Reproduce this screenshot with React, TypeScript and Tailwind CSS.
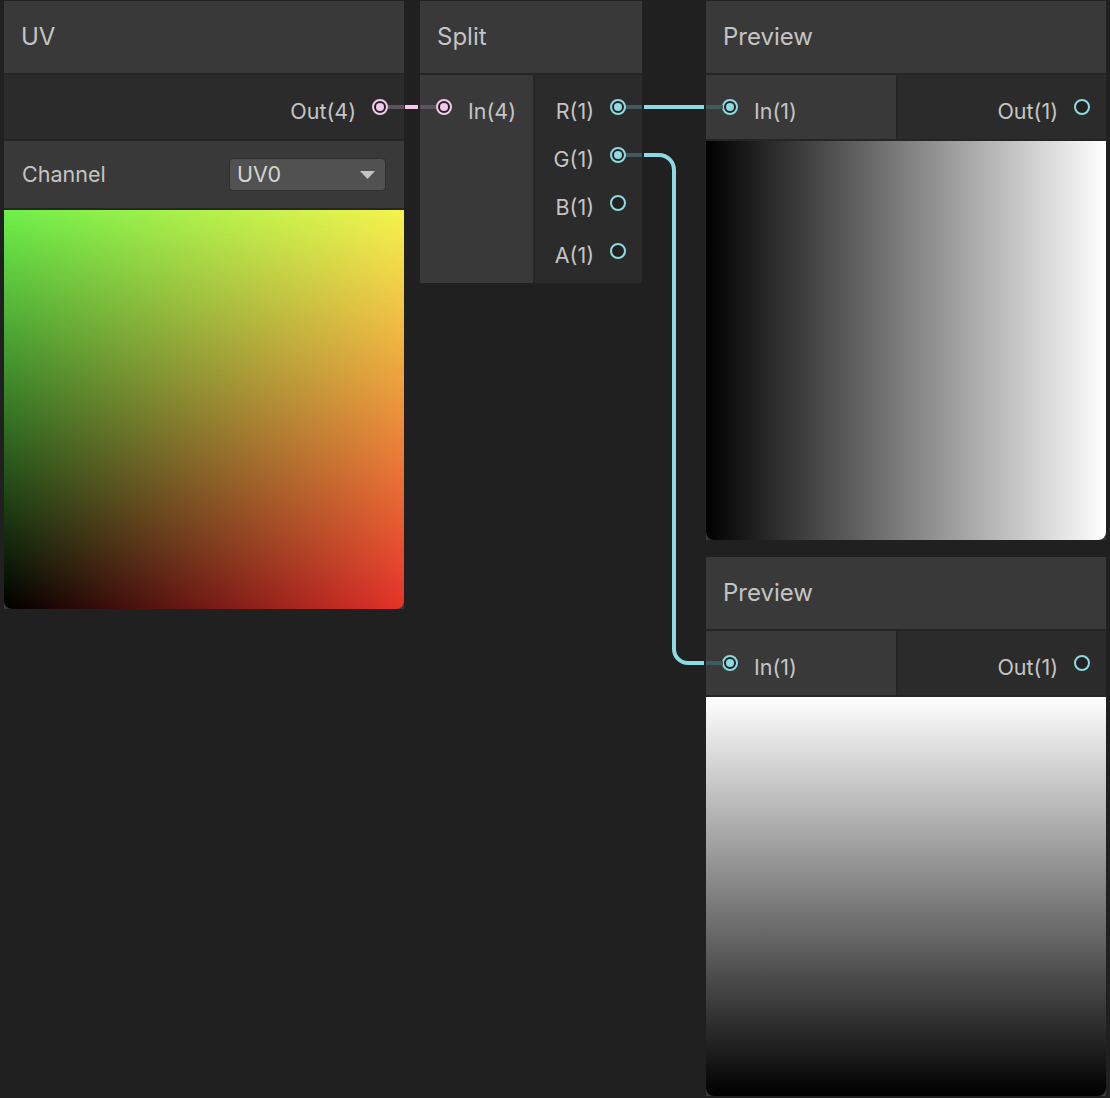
import React from "react";

const PINK = "#f3c7ee";
const CYAN = "#8cdbe2";

type Port = { label: string; color: string; connected?: boolean };

const Dot = ({ color, connected }: { color: string; connected?: boolean }) => (
    <div
        className="w-[16px] h-[16px] rounded-full border-2 bg-[#222222] flex items-center justify-center shrink-0"
        style={{ borderColor: color }}
    >
        {connected && <div className="w-[8px] h-[8px] rounded-full" style={{ backgroundColor: color }} />}
    </div>
);

const InPort = ({ port }: { port: Port }) => (
    <div className="h-[48px] flex items-center pl-[16px] gap-[16px]">
        <Dot color={port.color} connected={port.connected} />
        <span className="translate-y-[4px]">{port.label}</span>
    </div>
);

const OutPort = ({ port }: { port: Port }) => (
    <div className="h-[48px] flex items-center justify-end pr-[16px] gap-[16px]">
        <span className="translate-y-[4px]">{port.label}</span>
        <Dot color={port.color} connected={port.connected} />
    </div>
);

const Title = ({ text }: { text: string }) => (
    <div className="h-[74px] bg-[#393939] flex items-center pl-[17px] text-[24px] text-[#c4c4c4] border-b-2 border-[#252525]">
        {text}
    </div>
);

const UVNode = () => (
    <div className="absolute left-[4px] top-[1px] w-[400px] bg-[#393939]">
        <Title text="UV" />
        <div className="bg-[#2b2b2b] py-[8px] border-b-2 border-[#252525]">
            <OutPort port={{ label: "Out(4)", color: PINK, connected: true }} />
        </div>
        <div className="h-[69px] flex items-center justify-between pl-[18px] pr-[18px] border-b-2 border-[#252525]">
            <span>Channel</span>
            <div className="w-[157px] h-[33px] bg-[#515151] border border-[#2e2e2e] rounded-[4px] flex items-center justify-between pl-[7px] pr-[10px] text-[#d4d4d4]">
                <span>UV0</span>
                <svg width="15" height="8" viewBox="0 0 15 8">
                    <path d="M0 0 H15 L7.5 8 Z" fill="#c4c4c4" />
                </svg>
            </div>
        </div>
        <div className="relative h-[399px] rounded-b-[8px] overflow-hidden bg-[linear-gradient(to_right,#000000,#e6322a)]">
            <div className="absolute inset-0 bg-[linear-gradient(to_right,#6ef04a,#f5f44e)] [mask-image:linear-gradient(to_bottom,black,transparent)]" />
        </div>
    </div>
);

const SplitNode = () => (
    <div className="absolute left-[420px] top-[1px] w-[222px] bg-[#393939]">
        <Title text="Split" />
        <div className="flex h-[208px]">
            <div className="w-[113px] bg-[#393939] py-[8px]">
                <InPort port={{ label: "In(4)", color: PINK, connected: true }} />
            </div>
            <div className="w-[2px] bg-[#252525]" />
            <div className="flex-1 bg-[#2b2b2b] py-[8px]">
                <OutPort port={{ label: "R(1)", color: CYAN, connected: true }} />
                <OutPort port={{ label: "G(1)", color: CYAN, connected: true }} />
                <OutPort port={{ label: "B(1)", color: CYAN }} />
                <OutPort port={{ label: "A(1)", color: CYAN }} />
            </div>
        </div>
    </div>
);

const PreviewNode = ({ top, vertical }: { top: string; vertical?: boolean }) => (
    <div className={`absolute left-[706px] w-[400px] bg-[#393939] ${top}`}>
        <Title text="Preview" />
        <div className="flex border-b-2 border-[#252525]">
            <div className="w-[190px] bg-[#393939] py-[8px]">
                <InPort port={{ label: "In(1)", color: CYAN, connected: true }} />
            </div>
            <div className="w-[2px] bg-[#252525]" />
            <div className="flex-1 bg-[#2b2b2b] py-[8px]">
                <OutPort port={{ label: "Out(1)", color: CYAN }} />
            </div>
        </div>
        <div
            className={`h-[399px] rounded-b-[8px] ${
                vertical
                    ? "bg-[linear-gradient(to_bottom,#ffffff,#000000)]"
                    : "bg-[linear-gradient(to_right,#000000,#ffffff)]"
            }`}
        />
    </div>
);

const Wires = () => (
    <svg className="absolute inset-0 pointer-events-none" width="1110" height="1098">
        {/* port stubs inside the nodes */}
        <path d="M388 107 H404 M420 107 H436" stroke="#5c5260" strokeWidth="4" />
        <path d="M626 107 H642 M626 155 H642 M706 107 H723 M706 663 H723" stroke="#415a5b" strokeWidth="4" />
        {/* edges */}
        <path d="M405 107 H418" stroke={PINK} strokeWidth="4" />
        <path d="M644 107 H704" stroke={CYAN} strokeWidth="4" />
        <path
            d="M644 155 H659 A15 15 0 0 1 674 170 V649 A14 14 0 0 0 688 663 H704"
            stroke={CYAN}
            strokeWidth="4"
            fill="none"
        />
    </svg>
);

export default function App() {
    return (
        <div className="relative w-[1110px] h-[1098px] overflow-hidden bg-[#202020] text-[21.5px] text-[#c4c4c4] font-['Inter',sans-serif]">
            <UVNode />
            <SplitNode />
            <PreviewNode top="top-[1px]" />
            <PreviewNode top="top-[557px]" vertical />
            <Wires />
        </div>
    );
}
